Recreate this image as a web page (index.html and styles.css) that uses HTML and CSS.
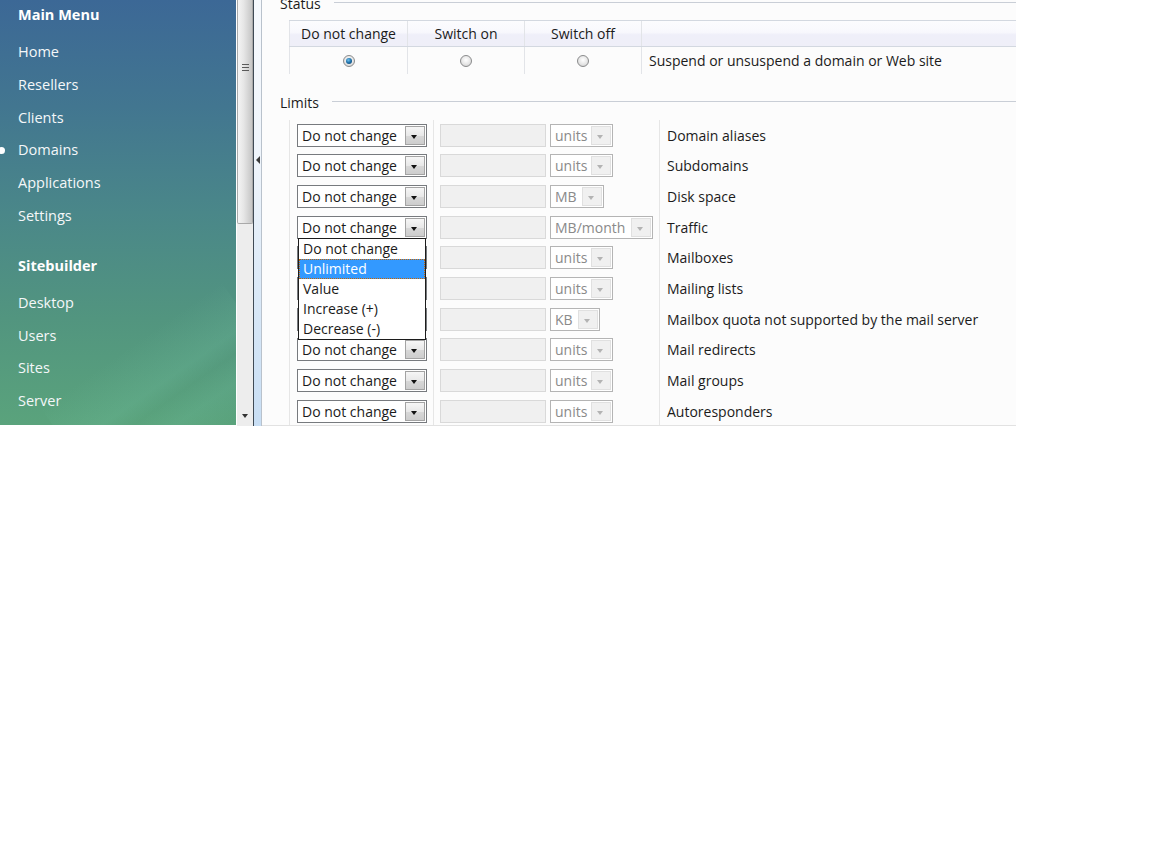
FILE: index.html
```html
<!DOCTYPE html>
<html lang="en">
<head>
<meta charset="utf-8">
<title>Domains</title>
<link rel="stylesheet" href="styles.css">
</head>
<body>
<div class="app">
  <nav class="sidebar">
    <div class="menu-title">Main Menu</div>
    <ul class="menu">
      <li>Home</li>
      <li>Resellers</li>
      <li>Clients</li>
      <li class="active">Domains</li>
      <li>Applications</li>
      <li>Settings</li>
    </ul>
    <div class="menu-title second">Sitebuilder</div>
    <ul class="menu">
      <li>Desktop</li>
      <li>Users</li>
      <li>Sites</li>
      <li>Server</li>
    </ul>
    <div class="streak"></div>
  </nav>
  <div class="scrollbar">
    <div class="thumb"><span class="grip"></span></div>
    <span class="down-arrow"></span>
  </div>
  <div class="divider"></div>
  <div class="splitter"><span class="collapse-arrow"></span></div>
  <main class="content">
    <section class="group status">
      <div class="legend"><span>Status</span><i class="rule"></i></div>
      <div class="status-table">
        <div class="st-row head">
          <div class="st-cell c1">Do not change</div>
          <div class="st-cell c2">Switch on</div>
          <div class="st-cell c3">Switch off</div>
          <div class="st-cell c4"></div>
        </div>
        <div class="st-row">
          <div class="st-cell c1"><span class="radio checked"></span></div>
          <div class="st-cell c2"><span class="radio"></span></div>
          <div class="st-cell c3"><span class="radio"></span></div>
          <div class="st-cell c4 desc">Suspend or unsuspend a domain or Web site</div>
        </div>
      </div>
    </section>

    <section class="group limits">
      <div class="legend"><span>Limits</span><i class="rule"></i></div>
      <div class="limits-table">
        <div class="lt-row">
          <div class="lt-cell a"><div class="select"><span class="val">Do not change</span><span class="btn"></span></div></div>
          <div class="lt-cell b"><span class="input"></span><div class="unit w63"><span class="val">units</span><span class="btn"></span></div></div>
          <div class="lt-cell c">Domain aliases</div>
        </div>
        <div class="lt-row">
          <div class="lt-cell a"><div class="select"><span class="val">Do not change</span><span class="btn"></span></div></div>
          <div class="lt-cell b"><span class="input"></span><div class="unit w63"><span class="val">units</span><span class="btn"></span></div></div>
          <div class="lt-cell c">Subdomains</div>
        </div>
        <div class="lt-row">
          <div class="lt-cell a"><div class="select"><span class="val">Do not change</span><span class="btn"></span></div></div>
          <div class="lt-cell b"><span class="input"></span><div class="unit w54"><span class="val">MB</span><span class="btn"></span></div></div>
          <div class="lt-cell c">Disk space</div>
        </div>
        <div class="lt-row">
          <div class="lt-cell a">
            <div class="select open"><span class="val">Do not change</span><span class="btn"></span>
              <ul class="dropdown">
                <li>Do not change</li>
                <li class="hl">Unlimited</li>
                <li>Value</li>
                <li>Increase (+)</li>
                <li>Decrease (-)</li>
              </ul>
            </div>
          </div>
          <div class="lt-cell b"><span class="input"></span><div class="unit w103"><span class="val">MB/month</span><span class="btn"></span></div></div>
          <div class="lt-cell c">Traffic</div>
        </div>
        <div class="lt-row under">
          <div class="lt-cell a"><div class="select"><span class="val">Do not change</span><span class="btn"></span></div></div>
          <div class="lt-cell b"><span class="input"></span><div class="unit w63"><span class="val">units</span><span class="btn"></span></div></div>
          <div class="lt-cell c">Mailboxes</div>
        </div>
        <div class="lt-row under">
          <div class="lt-cell a"><div class="select"><span class="val">Do not change</span><span class="btn"></span></div></div>
          <div class="lt-cell b"><span class="input"></span><div class="unit w63"><span class="val">units</span><span class="btn"></span></div></div>
          <div class="lt-cell c">Mailing lists</div>
        </div>
        <div class="lt-row under">
          <div class="lt-cell a"><div class="select"><span class="val">Do not change</span><span class="btn"></span></div></div>
          <div class="lt-cell b"><span class="input"></span><div class="unit w50"><span class="val">KB</span><span class="btn"></span></div></div>
          <div class="lt-cell c">Mailbox quota not supported by the mail server</div>
        </div>
        <div class="lt-row">
          <div class="lt-cell a"><div class="select"><span class="val">Do not change</span><span class="btn"></span></div></div>
          <div class="lt-cell b"><span class="input"></span><div class="unit w63"><span class="val">units</span><span class="btn"></span></div></div>
          <div class="lt-cell c">Mail redirects</div>
        </div>
        <div class="lt-row">
          <div class="lt-cell a"><div class="select"><span class="val">Do not change</span><span class="btn"></span></div></div>
          <div class="lt-cell b"><span class="input"></span><div class="unit w63"><span class="val">units</span><span class="btn"></span></div></div>
          <div class="lt-cell c">Mail groups</div>
        </div>
        <div class="lt-row">
          <div class="lt-cell a"><div class="select"><span class="val">Do not change</span><span class="btn"></span></div></div>
          <div class="lt-cell b"><span class="input"></span><div class="unit w63"><span class="val">units</span><span class="btn"></span></div></div>
          <div class="lt-cell c">Autoresponders</div>
        </div>
      </div>
    </section>
  </main>
</div>
</body>
</html>
```
FILE: styles.css
```css
* { box-sizing: border-box; }
html, body { margin: 0; padding: 0; background: #ffffff; }
body {
  font-family: "Open Sans", "Noto Sans", sans-serif;
  font-size: 14px;
  color: #1b1b1b;
}

.app {
  display: flex;
  width: 1016px;
  height: 426px;
  overflow: hidden;
}

/* ---------- sidebar ---------- */
.sidebar {
  width: 236px;
  height: 425px;
  flex: none;
  position: relative;
  overflow: hidden;
  padding-left: 18px;
  color: #f4f7f9;
  background: linear-gradient(to bottom, #3c6896 0%, #427690 25%, #4a8789 50%, #52957f 75%, #5aa37c 100%);
}
.menu-title {
  font-weight: 700;
  font-size: 14.5px;
  height: 30px;
  line-height: 30px;
  color: #ffffff;
}
.menu-title.second { margin-top: 18px; }
.menu {
  list-style: none;
  margin: 6px 0 0;
  padding: 0;
}
.menu li {
  height: 32.8px;
  line-height: 32.8px;
  font-size: 14.5px;
  position: relative;
}
.menu li.active::before {
  content: "";
  position: absolute;
  left: -20px;
  top: 13px;
  width: 7px;
  height: 7px;
  border-radius: 50%;
  background: #ffffff;
}
.streak {
  position: absolute;
  right: -40px;
  bottom: -30px;
  width: 220px;
  height: 120px;
  transform: rotate(-35deg);
  background: linear-gradient(to bottom, rgba(255,255,255,0) 0%, rgba(120,200,170,0.18) 40%, rgba(255,255,255,0) 55%, rgba(120,200,170,0.15) 75%, rgba(255,255,255,0) 100%);
  pointer-events: none;
}

/* ---------- scrollbar ---------- */
.scrollbar {
  width: 17px;
  flex: none;
  position: relative;
  background: #ededed;
  border-left: 1px solid #ffffff;
}
.thumb {
  position: absolute;
  left: 0;
  right: 0;
  top: 0;
  height: 224px;
  border: 1px solid #a9a9a9;
  border-top: none;
  border-radius: 0 0 2px 2px;
  background: linear-gradient(to right, #f4f4f4 0%, #e6e6e6 40%, #d6d6d6 70%, #c6c6c6 100%);
}
.grip {
  position: absolute;
  left: 4px;
  top: 64px;
  width: 7px;
  height: 7px;
  border-top: 1px solid #5a5a5a;
  border-bottom: 1px solid #5a5a5a;
}
.grip::after {
  content: "";
  position: absolute;
  left: 0;
  right: 0;
  top: 2px;
  border-top: 1px solid #5a5a5a;
}
.down-arrow {
  position: absolute;
  left: 5px;
  top: 414px;
  width: 0;
  height: 0;
  border-left: 3.5px solid transparent;
  border-right: 3.5px solid transparent;
  border-top: 4px solid #333333;
}

.divider {
  width: 1px;
  flex: none;
  background: #3f4a55;
}
.splitter {
  width: 8px;
  flex: none;
  position: relative;
  border-right: 1px solid #b9c2cc;
  background: linear-gradient(to bottom, #f6f9fd 0%, #eef4fb 40%, #d6e6f6 75%, #c8def4 100%);
}
.collapse-arrow {
  position: absolute;
  left: 2px;
  top: 156px;
  width: 0;
  height: 0;
  border-top: 4px solid transparent;
  border-bottom: 4px solid transparent;
  border-right: 4px solid #3a3a3a;
}

/* ---------- content ---------- */
.content {
  flex: 1;
  height: 426px;
  overflow: hidden;
  background: #fcfcfc;
  border-bottom: 1px solid #e2e2e2;
  padding-left: 18px;
}
.legend {
  display: flex;
  align-items: center;
  height: 19px;
  line-height: 19px;
}
.legend .rule {
  flex: 1;
  height: 1px;
  margin-left: 13px;
  margin-bottom: 2px;
  background: #c9ced6;
}
.group.status { margin-top: -6.5px; }
.group.limits { margin-top: 19px; }

/* status table */
.status-table {
  margin: 7.5px 0 0 9px;
}
.st-row {
  display: flex;
  height: 27px;
}
.st-row.head {
  border-top: 1px solid #d3d8e0;
  border-bottom: 1px solid #d3d8e0;
  background: linear-gradient(to bottom, #fcfcfe 0%, #f8f8fd 45%, #efeff9 55%, #efeff8 100%);
}
.st-cell {
  display: flex;
  align-items: center;
  justify-content: center;
  border-left: 1px solid #e2e4e8;
}
.st-cell.c1 { width: 118px; }
.st-cell.c2 { width: 117px; }
.st-cell.c3 { width: 117px; }
.st-cell.c4 { flex: 1; justify-content: flex-start; padding-left: 7px; }

.radio {
  width: 12px;
  height: 12px;
  border-radius: 50%;
  border: 1px solid #8a8b8c;
  background: radial-gradient(circle at 50% 40%, #ffffff 0%, #e6e6e6 55%, #c8c8c8 100%);
  position: relative;
}
.radio.checked::after {
  content: "";
  position: absolute;
  left: 2px;
  top: 2px;
  width: 6px;
  height: 6px;
  border-radius: 50%;
  background: radial-gradient(circle at 40% 35%, #6fc1ee 0%, #1d6fa8 50%, #0c3a60 100%);
}

/* limits table */
.limits-table {
  margin: 8px 0 0 9px;
}
.lt-row {
  display: flex;
  height: 30.67px;
}
.lt-cell {
  display: flex;
  align-items: center;
  border-left: 1px solid #e6e6e6;
}
.lt-cell.a { width: 144px; padding-left: 7px; }
.lt-cell.b { width: 226px; padding-left: 6px; gap: 4px; }
.lt-cell.c { flex: 1; padding-left: 7px; }

.select {
  position: relative;
  display: flex;
  width: 130px;
  height: 23px;
  border: 1px solid #777a7e;
  background: #ffffff;
}
.select .val,
.unit .val {
  flex: 1;
  line-height: 21px;
  padding-left: 4px;
  white-space: nowrap;
  overflow: hidden;
}
.select .btn,
.unit .btn {
  position: relative;
  width: 20px;
  margin: 1px;
  border: 1px solid #a3a3a3;
  background: linear-gradient(to bottom, #f6f6f6 0%, #e8e8e8 50%, #d8d8d8 51%, #cdcdcd 100%);
}
.select .btn::after,
.unit .btn::after {
  content: "";
  position: absolute;
  left: 5px;
  top: 8px;
  border-left: 3.5px solid transparent;
  border-right: 3.5px solid transparent;
  border-top: 4px solid #111111;
}
.lt-row.under .select .val { visibility: hidden; }

.input {
  width: 106px;
  height: 23px;
  border: 1px solid #d9d9d9;
  background: #f0f0f0;
}
.unit {
  display: flex;
  height: 23px;
  border: 1px solid #b4b4b4;
  background: #ffffff;
  color: #8a8a8a;
}
.unit .btn {
  border-color: #e0e0e0;
  background: #f0f0f0;
}
.unit .btn::after { border-top-color: #b3b3b3; }
.unit.w63 { width: 63px; }
.unit.w54 { width: 54px; }
.unit.w103 { width: 103px; }
.unit.w50 { width: 50px; }

.dropdown {
  position: absolute;
  left: 0;
  top: 100%;
  width: 128px;
  margin: 0;
  padding: 0;
  list-style: none;
  background: #ffffff;
  border: 1px solid #1c1c1c;
  z-index: 5;
}
.dropdown li {
  height: 20px;
  line-height: 20px;
  padding-left: 4px;
  white-space: nowrap;
}
.dropdown li.hl {
  background: #3399ff;
  color: #ffffff;
  outline: 1px dotted #c86400;
  outline-offset: -1px;
}
```
